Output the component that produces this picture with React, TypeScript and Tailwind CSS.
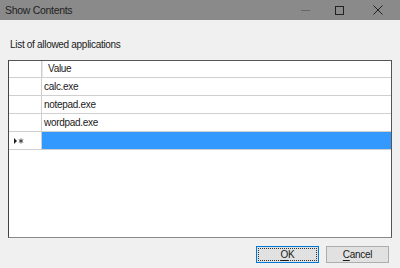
import React from "react";

const rows = ["calc.exe", "notepad.exe", "wordpad.exe"];

export default function App() {
  return (
    <div
      className="flex h-[268px] w-[400px] flex-col overflow-hidden bg-[#f0f0f0] text-[10px] tracking-[-0.3px] text-[#1a1a1a]"
      style={{ fontFamily: '"Liberation Sans", Arial, sans-serif' }}
    >
      {/* title bar */}
      <div className="flex h-[20px] shrink-0 items-center bg-[#8a8a8a] pl-[5px]">
        <span className="text-[10.5px] leading-none text-[#222]">Show Contents</span>
        <div className="ml-auto flex h-full items-center">
          <div className="flex h-full w-[34px] items-center justify-center">
            <div className="h-px w-[9px] bg-[#666]" />
          </div>
          <div className="flex h-full w-[34px] items-center justify-center">
            <div className="h-[9px] w-[9px] border border-[#222]" />
          </div>
          <div className="flex h-full w-[44px] items-center justify-center">
            <svg width="10" height="10" viewBox="0 0 10 10">
              <path d="M0.5 0.5 L9.5 9.5 M9.5 0.5 L0.5 9.5" stroke="#222" strokeWidth="1" />
            </svg>
          </div>
        </div>
      </div>

      {/* body */}
      <div className="flex flex-1 flex-col px-[8px]">
        <div className="pl-[2px] pt-[17px] pb-[8px] leading-[15px]">List of allowed applications</div>

        <div className="flex h-[178px] w-[384px] flex-col border border-t-[#555] border-l-[#444] border-r-[#555] border-b-[#888] bg-white">
          {/* header */}
          <div className="flex h-[17px] border-b border-[#cfcfcf]">
            <div className="w-[33px] border-r border-[#cfcfcf]" />
            <div className="flex-1 border-l border-[#e6e6e6] pl-[5px] leading-[16px] text-[#222]">Value</div>
          </div>
          {rows.map((r) => (
            <div key={r} className="flex h-[18px] border-b border-[#cfcfcf]">
              <div className="w-[33px] border-r border-[#cfcfcf]" />
              <div className="flex-1 pl-[2px] leading-[17px]">{r}</div>
            </div>
          ))}
          <div className="flex h-[18px] border-b border-[#cfcfcf]">
            <div className="flex w-[33px] items-center border-r border-[#cfcfcf] pl-[5px]">
              <svg width="10" height="6" viewBox="0 0 10 6">
                <path d="M0 0 L3 3 L0 6 Z" fill="#222" />
                <path d="M7 0.5 V5.5 M4.8 1.7 L9.2 4.3 M9.2 1.7 L4.8 4.3" stroke="#333" strokeWidth="0.9" />
              </svg>
            </div>
            <div className="flex-1 bg-[#3399ff]" />
          </div>
          <div className="flex-1" />
        </div>

        {/* buttons */}
        <div className="mt-[8px] flex justify-end gap-[7px] pr-[3px]">
          <button className="flex h-[17px] w-[63px] items-center justify-center border border-[#0078d7] bg-[#e1e1e1] p-px">
            <span className="flex h-full w-full items-center justify-center border border-dotted border-[#333] leading-none">
              <span className="underline underline-offset-2">O</span>K
            </span>
          </button>
          <button className="flex h-[17px] w-[63px] items-center justify-center border border-[#adadad] bg-[#e1e1e1] leading-none">
            <span className="underline underline-offset-2">C</span>ancel
          </button>
        </div>
      </div>
    </div>
  );
}
